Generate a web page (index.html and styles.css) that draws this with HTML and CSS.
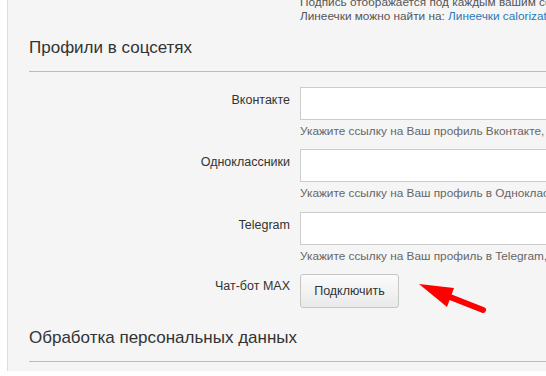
FILE: index.html
```html
<!DOCTYPE html>
<html>
  <head>
    <meta charset="utf-8">
    <title>Профиль</title>
    <link rel="stylesheet" href="styles.css">
  </head>
  <body>
    <div class='page'>
      <div class='note'>
        Подпись отображается под каждым вашим сообщением<br>
        Линеечки можно найти на: <a href='#'>Линеечки calorizator.ru</a>
      </div>

      <h2 class='sectionTitle'>Профили в соцсетях</h2>
      <div class='fields'>
        <div class='row'>
          <label class='rowLabel'>Вконтакте</label>
          <div class='rowField'>
            <input class='textField' type='text' />
            <div class='help'>Укажите ссылку на Ваш профиль Вконтакте, например https://vk.com/id</div>
          </div>
        </div>
        <div class='row'>
          <label class='rowLabel'>Одноклассники</label>
          <div class='rowField'>
            <input class='textField' type='text' />
            <div class='help'>Укажите ссылку на Ваш профиль в Одноклассниках</div>
          </div>
        </div>
        <div class='row'>
          <label class='rowLabel'>Telegram</label>
          <div class='rowField'>
            <input class='textField' type='text' />
            <div class='help'>Укажите ссылку на Ваш профиль в Telegram, например</div>
          </div>
        </div>
        <div class='row'>
          <label class='rowLabel rowLabelBtn'>Чат-бот MAX</label>
          <div class='rowField'>
            <button class='button'>Подключить</button>
          </div>
        </div>
      </div>

      <h2 class='sectionTitle'>Обработка персональных данных</h2>

      <svg class='arrow' width='75' height='36' viewBox='0 0 75 36'>
        <line x1='35' y1='18' x2='68' y2='31' stroke='#f00' stroke-width='6' stroke-linecap='round' />
        <polygon points='4,5 39,9 32,28' fill='#f00' />
      </svg>
    </div>
  </body>
</html>
```

FILE: styles.css
```css
body {
  margin: 0;
  background-color: #fff;
  font-family: 'Liberation Sans', Arial, sans-serif;
  overflow: hidden;
}
.page {
  position: relative;
  margin-left: 7px;
  border-left: 1px solid #ddd;
  background-color: #f5f5f5;
  min-height: 376px;
  padding-left: 21px;
}
.note {
  margin-top: -5px;
  margin-left: 271px;
  font-size: 11.8px;
  line-height: 14px;
  color: #555;
  white-space: nowrap;
}
.note a {
  color: #2a7ab8;
  text-decoration: none;
}
.sectionTitle {
  margin: 15px 0 0 0;
  padding-bottom: 13px;
  border-bottom: 1px solid #bbb;
  font-size: 17px;
  font-weight: normal;
  line-height: 20px;
  color: #333;
}
.fields {
  padding-top: 15px;
}
.fields + .sectionTitle {
  margin-top: 20px;
}
.row {
  display: grid;
  grid-template-columns: 261px 1fr;
  column-gap: 10px;
  margin-bottom: 11px;
}
.row:nth-child(2) {
  margin-bottom: 12px;
}
.row:last-child {
  margin-bottom: 0;
}
.rowLabel {
  text-align: right;
  font-size: 12.5px;
  line-height: 14px;
  padding-top: 6px;
  color: #333;
}
.rowLabelBtn {
  padding-top: 5px;
}
.rowField {
  white-space: nowrap;
}
.textField {
  display: block;
  box-sizing: border-box;
  width: 320px;
  height: 33px;
  margin: 0;
  border: 1px solid #ccc;
  background-color: #fff;
}
.help {
  margin-top: 4px;
  font-size: 11.8px;
  line-height: 14px;
  color: #666;
}
.button {
  box-sizing: border-box;
  width: 99px;
  height: 34px;
  border: 1px solid #c6c6c6;
  border-radius: 3px;
  background: linear-gradient(#fbfbfb, #e9e9e9);
  font-family: 'Liberation Sans', Arial, sans-serif;
  font-size: 12.5px;
  color: #333;
}
.arrow {
  position: absolute;
  left: 407px;
  top: 284px;
}
```
